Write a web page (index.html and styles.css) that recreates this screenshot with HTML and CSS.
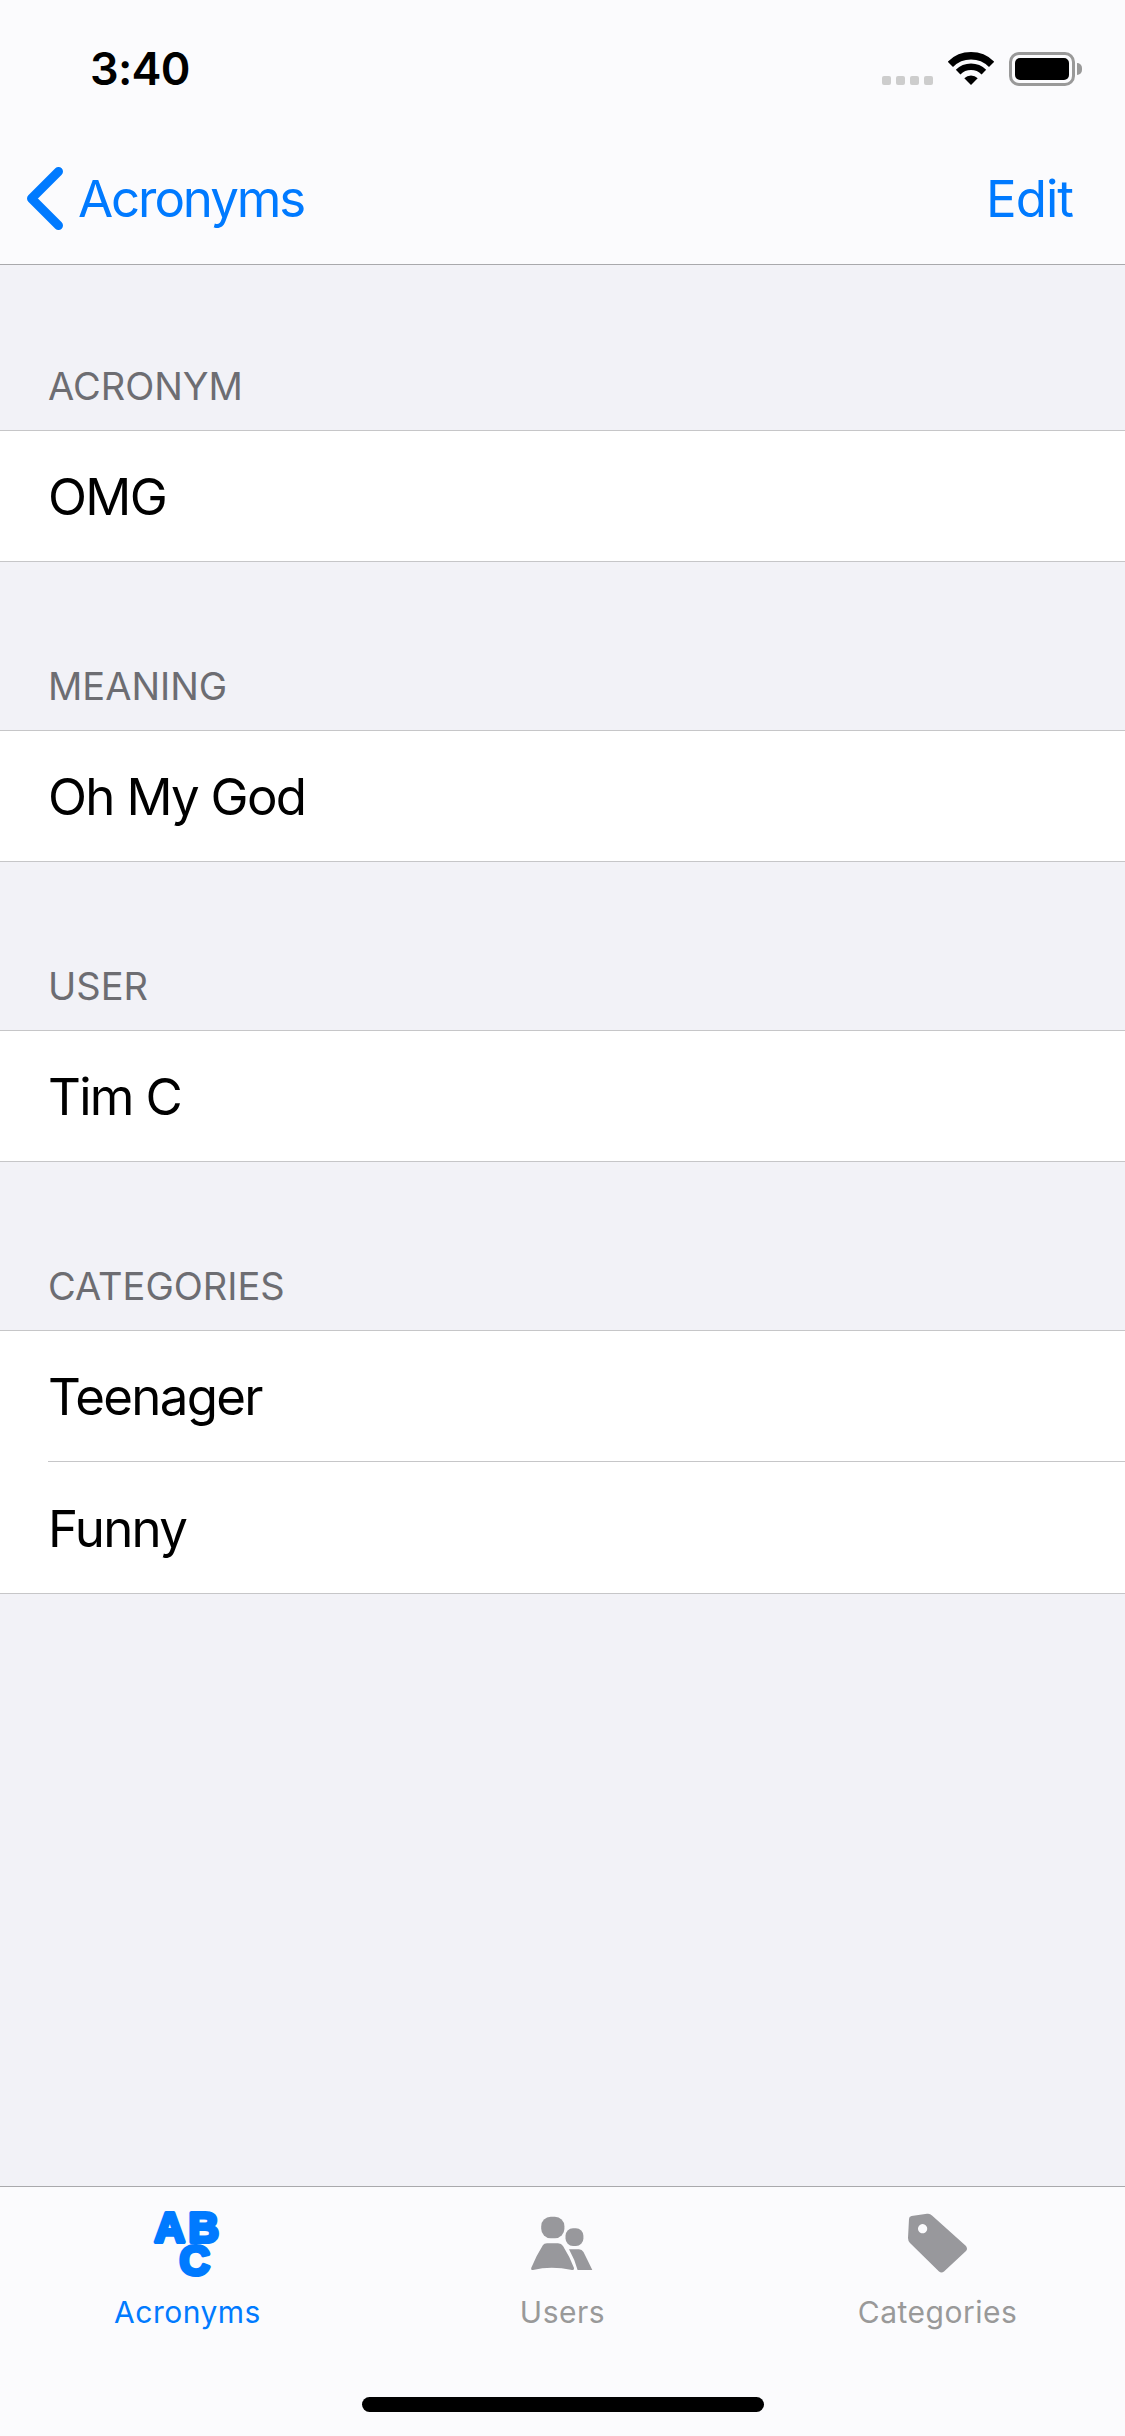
FILE: index.html
```html
<!DOCTYPE html>
<html>
<head lang="en">
    <meta charset="UTF-8">
    <title>Acronyms</title>
    <link rel="stylesheet" href="styles.css">
</head>
<body>
    <div id="app">
        <div id="top">
            <div class="status">
                <span class="time">3:40</span>
                <div class="status-icons">
                    <div class="dots"><i></i><i></i><i></i><i></i></div>
                    <svg class="wifi" viewBox="0 0 46 33">
                        <path d="M2.35 12.35A29.2 29.2 0 0 1 43.65 12.35" fill="none" stroke="#000" stroke-width="7.5"/>
                        <path d="M10.13 20.13A18.2 18.2 0 0 1 35.87 20.13" fill="none" stroke="#000" stroke-width="6.5"/>
                        <path d="M23 33L16.3 26.3A9.5 9.5 0 0 1 29.7 26.3Z"/>
                    </svg>
                    <div class="battery"><div class="battery-fill"></div></div>
                    <div class="battery-nub"></div>
                </div>
            </div>
            <div class="nav">
                <a class="back" href="javascript:;">
                    <svg class="chevron" viewBox="0 0 36 63">
                        <path d="M31.5 4.5L4.5 31.5L31.5 58.5" fill="none" stroke="#007aff" stroke-width="9" stroke-linecap="round" stroke-linejoin="round"/>
                    </svg>
                    <span>Acronyms</span>
                </a>
                <a class="edit" href="javascript:;">Edit</a>
            </div>
        </div>

        <div id="content">
            <div class="section">
                <div class="section-title">ACRONYM</div>
                <ul class="list"><li>OMG</li></ul>
            </div>
            <div class="section">
                <div class="section-title">MEANING</div>
                <ul class="list"><li>Oh My God</li></ul>
            </div>
            <div class="section">
                <div class="section-title">USER</div>
                <ul class="list"><li>Tim C</li></ul>
            </div>
            <div class="section">
                <div class="section-title">CATEGORIES</div>
                <ul class="list"><li>Teenager</li><li>Funny</li></ul>
            </div>
        </div>

        <div id="tabbar">
            <div class="tabs">
                <a class="tab active" href="javascript:;">
                    <svg class="tab-icon" viewBox="0 0 68 67">
                        <text class="abc" x="16" y="31" text-anchor="middle">A</text>
                        <text class="abc" x="50" y="31" text-anchor="middle">B</text>
                        <text class="abc" x="41" y="64" text-anchor="middle">C</text>
                    </svg>
                    <span>Acronyms</span>
                </a>
                <a class="tab" href="javascript:;">
                    <svg class="tab-icon" viewBox="0 0 68 67">
                        <rect x="12.2" y="5.7" width="23.2" height="21.6" rx="9.5"/>
                        <rect x="36.5" y="17.3" width="17.9" height="17.7" rx="7.5"/>
                        <path d="M14 34Q15 32.3 18 32.3L29 32.3Q32.5 32.3 34 35Q41 46 45 57Q45.5 59.5 43 59Q22 54.5 4 59Q1.5 59.5 2.2 57Q7 45 14 34Z"/>
                        <path d="M40 38.3L50 38.3Q53 38.3 54.5 41Q59 50 63.3 59L48.6 59Q46 49 40 38.3Z"/>
                    </svg>
                    <span>Users</span>
                </a>
                <a class="tab" href="javascript:;">
                    <svg class="tab-icon" viewBox="0 0 68 67">
                        <path fill-rule="evenodd" d="M7.5 5L23 2.8Q26 2.3 28 4.5L62 35Q64 38 62 40L40 60.5Q37.5 62.5 35 60.5L6 32Q4 30 4 27L5 8Q5 5.5 7.5 5ZM18.6 13.1a4.6 4.6 0 1 0 .01 0Z"/>
                    </svg>
                    <span>Categories</span>
                </a>
            </div>
            <div class="home-bar"></div>
        </div>
    </div>
</body>
</html>
```

FILE: styles.css
```css
*{
    box-sizing: border-box;
}
html,body{
    margin: 0;
    padding: 0;
}
body{
    font-family: Inter, "Liberation Sans", sans-serif;
    background-color: #f2f2f7;
}
a{
    text-decoration: none;
    color: #007aff;
}
ul{
    list-style: none;
    margin: 0;
    padding: 0;
}
#app{
    width: 1125px;
    height: 2436px;
    display: flex;
    flex-direction: column;
}

/*------------顶部----------------*/
#top{
    height: 265px;
    background-color: #fbfbfd;
    border-bottom: 1px solid #a9a9ac;
}
.status{
    height: 132px;
    display: flex;
    justify-content: space-between;
    padding: 39px 43px 0 90px;
}
.time{
    font-size: 45px;
    font-weight: 600;
    line-height: 60px;
    color: #000;
    letter-spacing: -0.7px;
}
.status-icons{
    display: flex;
    align-items: flex-start;
    padding-top: 13px;
}
.dots{
    display: flex;
    gap: 5px;
    margin: 24px 15px 0 0;
}
.dots i{
    width: 9px;
    height: 9px;
    border-radius: 2px;
    background-color: #cdcdcd;
}
.wifi{
    width: 46px;
    height: 33px;
    margin-right: 15px;
}
.battery{
    width: 66px;
    height: 34px;
    border: 3px solid #999;
    border-radius: 10px;
    padding: 3px;
}
.battery-fill{
    height: 100%;
    background-color: #000;
    border-radius: 5px;
}
.battery-nub{
    width: 5px;
    height: 12px;
    margin: 11px 0 0 2px;
    background-color: #999;
    border-radius: 0 5px 5px 0;
}
.nav{
    height: 132px;
    display: flex;
    align-items: center;
    justify-content: space-between;
    padding: 0 52px 0 27px;
    font-size: 51px;
    letter-spacing: -2.1px;
}
.edit{
    letter-spacing: -1px;
}
.back{
    display: flex;
    align-items: center;
    gap: 15px;
}
.chevron{
    width: 36px;
    height: 63px;
}

/*------------列表----------------*/
#content{
    flex: 1;
}
.section{
    margin-bottom: 3px;
}
.section-title{
    height: 165px;
    display: flex;
    align-items: flex-end;
    padding: 0 0 21px 48px;
    font-size: 38px;
    line-height: 46px;
    color: #6d6d72;
}
.list{
    background-color: #fff;
    border-top: 1px solid #c6c6c8;
    border-bottom: 1px solid #c6c6c8;
}
.list li{
    height: 130px;
    display: flex;
    align-items: center;
    padding-left: 48px;
    font-size: 51px;
    letter-spacing: -1.7px;
    color: #000;
}
.list li + li{
    height: 131px;
    margin-top: 1px;
    padding-top: 2px;
    position: relative;
}
.list li + li::before{
    content: "";
    position: absolute;
    left: 48px;
    right: 0;
    top: -1px;
    height: 1px;
    background-color: #c6c6c8;
}

/*------------底部标签----------------*/
#tabbar{
    height: 250px;
    background-color: #fbfbfd;
    border-top: 1px solid #a9a9ac;
    display: flex;
    flex-direction: column;
}
.tabs{
    display: flex;
    height: 210px;
}
.tab{
    flex: 1;
    display: flex;
    flex-direction: column;
    align-items: center;
    padding-top: 24px;
    font-size: 30px;
    line-height: 40px;
    letter-spacing: 0.5px;
    color: #999;
    fill: #98989c;
}
.tab.active{
    color: #007aff;
    fill: #007aff;
}
.tab-icon{
    width: 68px;
    height: 67px;
    margin-bottom: 14px;
    overflow: visible;
}
.abc{
    font-family: "Liberation Sans", sans-serif;
    font-size: 42px;
    font-weight: bold;
    stroke: #007aff;
    stroke-width: 4px;
    stroke-linejoin: round;
}
.home-bar{
    width: 402px;
    height: 15px;
    margin: 0 auto;
    background-color: #000;
    border-radius: 8px;
}
```
